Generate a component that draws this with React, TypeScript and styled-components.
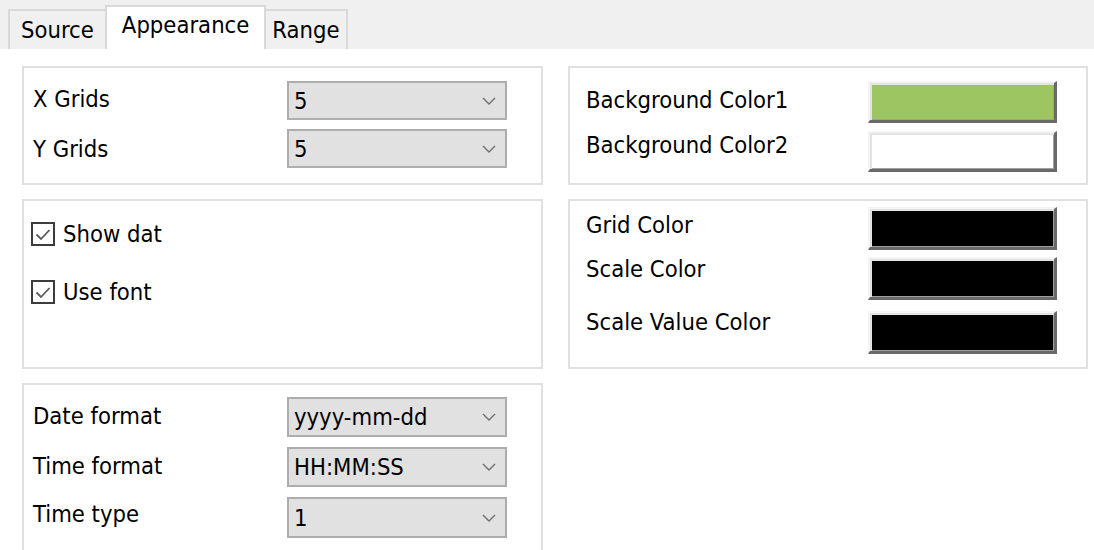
import styled, { createGlobalStyle } from "styled-components";

const GlobalStyle = createGlobalStyle`
  html, body {
    margin: 0;
    padding: 0;
    background: #ffffff;
  }
`;

const Window = styled.div`
  width: 1094px;
  height: 550px;
  overflow: hidden;
  background: #ffffff;
  font-family: "DejaVu Sans Condensed", "DejaVu Sans", sans-serif;
  font-stretch: condensed;
  font-size: 23.6px;
  color: #000000;
`;

const TabStrip = styled.div`
  height: 49px;
  background: #f0f0f0;
  display: flex;
  align-items: flex-end;
  padding-left: 8px;
  box-sizing: border-box;
`;

const Tab = styled.div<{ $active?: boolean; $pad?: number }>`
  height: ${(p) => (p.$active ? 44 : 40)}px;
  box-sizing: border-box;
  padding: ${(p) => (p.$active ? "0 15px 6px" : `0 ${p.$pad ?? 11}px`)};
  margin: ${(p) => (p.$active ? "0 -2px" : "0")};
  background: ${(p) => (p.$active ? "#ffffff" : "#f0f0f0")};
  border: 2px solid #d9d9d9;
  border-bottom: none;
  position: relative;
  z-index: ${(p) => (p.$active ? 1 : 0)};
  display: flex;
  align-items: center;
  white-space: nowrap;
`;

const Body = styled.div`
  display: grid;
  grid-template-columns: 521px 520px;
  column-gap: 25px;
  padding: 17px 0 0 22px;
`;

const Column = styled.div`
  display: flex;
  flex-direction: column;
  gap: 14px;
`;

const Group = styled.div<{ $height: number }>`
  height: ${(p) => p.$height}px;
  box-sizing: border-box;
  border: 2px solid #e0e0e0;
`;

const FieldGrid = styled.div<{ $top: number; $gap: number }>`
  display: grid;
  grid-template-columns: 254px 220px;
  row-gap: ${(p) => p.$gap}px;
  padding: ${(p) => p.$top}px 0 0 9px;
  align-items: center;
`;

const Label = styled.span<{ $lift?: number }>`
  display: block;
  padding-bottom: ${(p) => p.$lift ?? 0}px;
`;

const Select = styled.div<{ $height?: number }>`
  height: ${(p) => p.$height ?? 39}px;
  box-sizing: border-box;
  background: #e1e1e1;
  border: 2px solid #adadad;
  display: flex;
  align-items: center;
  justify-content: space-between;
  padding: 0 9px 0 5px;
`;

const Chevron = () => (
  <svg width="14" height="8" viewBox="0 0 14 8">
    <path d="M1 1 L7 7 L13 1" fill="none" stroke="#6e6e6e" strokeWidth="1.4" />
  </svg>
);

const CheckList = styled.div`
  display: flex;
  flex-direction: column;
  gap: 34px;
  padding: 21px 0 0 7px;
`;

const CheckRow = styled.label`
  display: flex;
  align-items: center;
  gap: 8px;
  height: 24px;
`;

const Box = styled.span`
  width: 24px;
  height: 24px;
  box-sizing: border-box;
  border: 2px solid #3c3c3c;
  background: #ffffff;
  display: flex;
  align-items: center;
  justify-content: center;
`;

const Tick = () => (
  <svg width="16" height="13" viewBox="0 0 16 13">
    <path d="M1.5 6.5 L6 11 L14.5 2" fill="none" stroke="#5a5a5a" strokeWidth="1.8" />
  </svg>
);

const ColorGrid = styled.div<{ $top: number }>`
  display: grid;
  grid-template-columns: 282px 189px;
  padding: ${(p) => p.$top}px 0 0 16px;
  align-items: center;
`;

const Swatch = styled.div<{ $fill: string; $height: number; $mt?: number }>`
  height: ${(p) => p.$height}px;
  margin-top: ${(p) => p.$mt ?? 0}px;
  box-sizing: border-box;
  background: ${(p) => p.$fill};
  border-style: solid;
  border-width: 2px 3px 3px 2px;
  border-color: #f4f4f4 #696969 #696969 #f4f4f4;
  box-shadow: inset 2px 2px 0 #e3e3e3, inset -1px -1px 0 #a0a0a0;
`;

function SelectField({ value, height }: { value: string; height?: number }) {
  return (
    <Select $height={height}>
      <span>{value}</span>
      <Chevron />
    </Select>
  );
}

export default function App() {
  return (
    <Window>
      <GlobalStyle />
      <TabStrip>
        <Tab $pad={11}>Source</Tab>
        <Tab $active>Appearance</Tab>
        <Tab $pad={6}>Range</Tab>
      </TabStrip>
      <Body>
        <Column>
          <Group $height={119}>
            <FieldGrid $top={13} $gap={9}>
              <Label $lift={3}>X Grids</Label>
              <SelectField value="5" />
              <Label>Y Grids</Label>
              <SelectField value="5" />
            </FieldGrid>
          </Group>
          <Group $height={170}>
            <CheckList>
              <CheckRow>
                <Box>
                  <Tick />
                </Box>
                Show dat
              </CheckRow>
              <CheckRow>
                <Box>
                  <Tick />
                </Box>
                Use font
              </CheckRow>
            </CheckList>
          </Group>
          <Group $height={200}>
            <FieldGrid $top={12} $gap={10}>
              <Label $lift={2}>Date format</Label>
              <SelectField value="yyyy-mm-dd" height={40} />
              <Label $lift={2}>Time format</Label>
              <SelectField value="HH:MM:SS" height={40} />
              <Label $lift={8}>Time type</Label>
              <SelectField value="1" height={41} />
            </FieldGrid>
          </Group>
        </Column>
        <Column>
          <Group $height={119}>
            <ColorGrid $top={13}>
              <Label $lift={4}>Background Color1</Label>
              <Swatch $fill="#9dc662" $height={42} />
              <Label $lift={6}>Background Color2</Label>
              <Swatch $fill="#ffffff" $height={41} $mt={8} />
            </ColorGrid>
          </Group>
          <Group $height={170}>
            <ColorGrid $top={6}>
              <Label $lift={8}>Grid Color</Label>
              <Swatch $fill="#000000" $height={43} />
              <Label $lift={12}>Scale Color</Label>
              <Swatch $fill="#000000" $height={43} $mt={7} />
              <Label $lift={10}>Scale Value Color</Label>
              <Swatch $fill="#000000" $height={43} $mt={11} />
            </ColorGrid>
          </Group>
        </Column>
      </Body>
    </Window>
  );
}
